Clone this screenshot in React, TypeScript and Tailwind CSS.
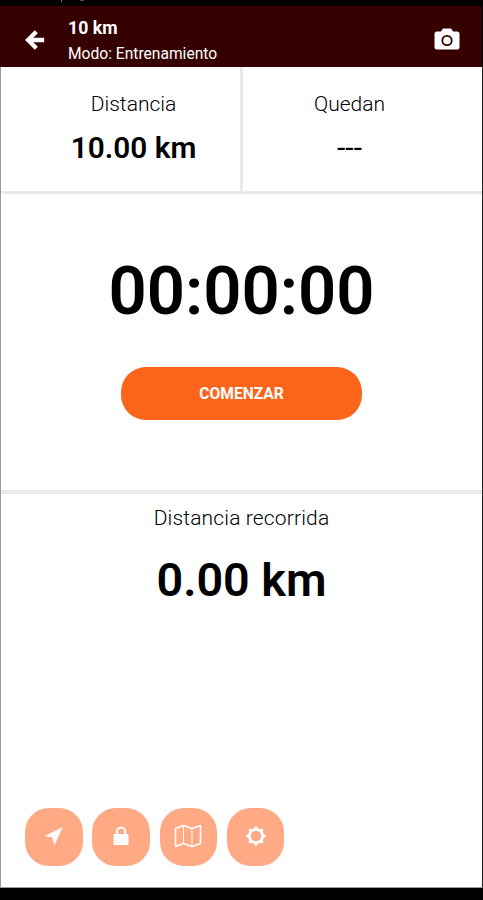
import type { ReactNode } from 'react';

interface StatProps {
  label: string;
  children: ReactNode;
}

function Stat({ label, children }: StatProps) {
  return (
    <div className="flex flex-col items-center pt-[23px]">
      <span className="text-[21px] leading-[28px] font-light">{label}</span>
      {children}
    </div>
  );
}

interface ToolButtonProps {
  label: string;
  children: ReactNode;
}

function ToolButton({ label, children }: ToolButtonProps) {
  return (
    <button
      aria-label={label}
      className="w-[57.5px] h-[57.5px] pb-[1px] rounded-[24px] bg-[#ffa985] text-white flex items-center justify-center">
      {children}
    </button>
  );
}

export default function App() {
  return (
    <div className="w-[483px] h-[900px] flex flex-col bg-black text-black font-['Roboto',sans-serif] overflow-hidden">
      {/* Status bar */}
      <div className="h-[6px] shrink-0 flex gap-3 pl-[61px]">
        <span className="w-px h-[2px] bg-[#777]" />
        <span className="w-[4px] h-px ml-[6px] bg-[#555]" />
      </div>

      {/* Header */}
      <header className="h-[61px] shrink-0 flex items-center bg-[#360000] text-white pl-[25px] pr-[22px] border-r border-black">
        <button aria-label="Volver" className="w-[20px] mt-[7px]">
          <svg viewBox="0 0 20 20" className="w-[20px] h-[20px]" fill="none" stroke="currentColor" strokeWidth="4.3">
            <path d="M11.3 1.7 3 10l8.3 8.3M3.5 10H19.2" />
          </svg>
        </button>
        <div className="flex flex-col ml-[23px] pt-[10px]">
          <span className="text-[17.7px] leading-[25px] font-bold">10 km</span>
          <span className="text-[15.6px] leading-[26px] font-normal">Modo: Entrenamiento</span>
        </div>
        <button aria-label="Cámara" className="ml-auto mt-[5px]">
          <svg viewBox="0 0 26 22" className="w-[26px] h-[22px]">
            <path
              d="M9 .5h8l2.2 3H23a2.5 2.5 0 0 1 2.5 2.5v13a2.5 2.5 0 0 1-2.5 2.5H3A2.5 2.5 0 0 1 .5 19V6A2.5 2.5 0 0 1 3 3.5h3.8z"
              fill="currentColor"
            />
            <circle cx="13" cy="12.5" r="4.7" fill="none" stroke="#360000" strokeWidth="1.8" />
          </svg>
        </button>
      </header>

      <main className="flex-1 flex flex-col bg-white border-l border-l-[#999] border-r border-r-[#222] border-b border-b-[#999]">
        {/* Distances */}
        <section className="h-[127px] grid grid-cols-[242px_1fr] border-b-[3px] border-[#e9e9e9]">
          <div className="border-r-[3px] border-[#e9e9e9] pl-[26px]">
            <Stat label="Distancia">
              <span className="mt-[12px] text-[29.8px] leading-[36px] font-semibold">10.00 km</span>
            </Stat>
          </div>
          <div className="pr-[26px]">
            <Stat label="Quedan">
              <span className="mt-[12px] text-[30px] leading-[36px]">---</span>
            </Stat>
          </div>
        </section>

        {/* Timer */}
        <section className="h-[300px] flex flex-col items-center pt-[57px] border-b-[4px] border-[#e9e9e9]">
          <span className="text-[67px] leading-[80px] font-semibold">00:00:00</span>
          <button className="mt-[36px] w-[241px] h-[53px] pt-[2px] rounded-[25px] bg-[#fb641b] text-white text-[15.6px] font-bold">
            COMENZAR
          </button>
        </section>

        {/* Covered distance */}
        <section className="flex flex-col items-center pt-[10px]">
          <span className="text-[21px] leading-[28px] font-light tracking-[0.15px]">Distancia recorrida</span>
          <span className="mt-[19px] text-[46.7px] leading-[58px] font-semibold">0.00 km</span>
        </section>

        {/* Tools */}
        <nav className="mt-auto mb-[21.5px] pl-[24px] flex gap-[9.8px]">
          <ToolButton label="Ubicación">
            <svg viewBox="0 0 20 20" className="w-[20px] h-[20px]" fill="currentColor">
              <path d="M18.8 1 .8 10l7.5 1.7L10.5 19.3z" />
            </svg>
          </ToolButton>
          <ToolButton label="Bloquear">
            <svg viewBox="0 0 16 20" className="w-[16px] h-[20px] mb-[1px]">
              <rect x=".5" y="8" width="15" height="11" rx="1" fill="currentColor" />
              <path d="M3.8 9V5.8a4.2 4.2 0 0 1 8.4 0V9" fill="none" stroke="currentColor" strokeWidth="2" />
            </svg>
          </ToolButton>
          <ToolButton label="Mapa">
            <svg viewBox="0 0 28 24" className="w-[28px] h-[24px]" fill="none" stroke="currentColor" strokeLinejoin="round">
              <path d="M1.5 4.5 9.5 1.5 18 4.5l8.5-3v18L18 22.5 9.5 19.5l-8 3z" strokeWidth="1.6" />
              <path d="M9.5 1.5v18M18 4.5v18" strokeWidth="1" />
            </svg>
          </ToolButton>
          <ToolButton label="Ajustes">
            <svg viewBox="0 0 22 22" className="w-[22px] h-[22px]">
              <path
                d="M11 .8 13.9 3.9 18.2 3.8 18.1 8.1 21.2 11 18.1 13.9 18.2 18.2 13.9 18.1 11 21.2 8.1 18.1 3.8 18.2 3.9 13.9 .8 11 3.9 8.1 3.8 3.8 8.1 3.9z"
                fill="currentColor"
              />
              <circle cx="11" cy="11" r="5.2" fill="#ffa985" />
            </svg>
          </ToolButton>
        </nav>
      </main>

      {/* Navigation bar */}
      <div className="h-[12px] shrink-0 bg-black" />
    </div>
  );
}
